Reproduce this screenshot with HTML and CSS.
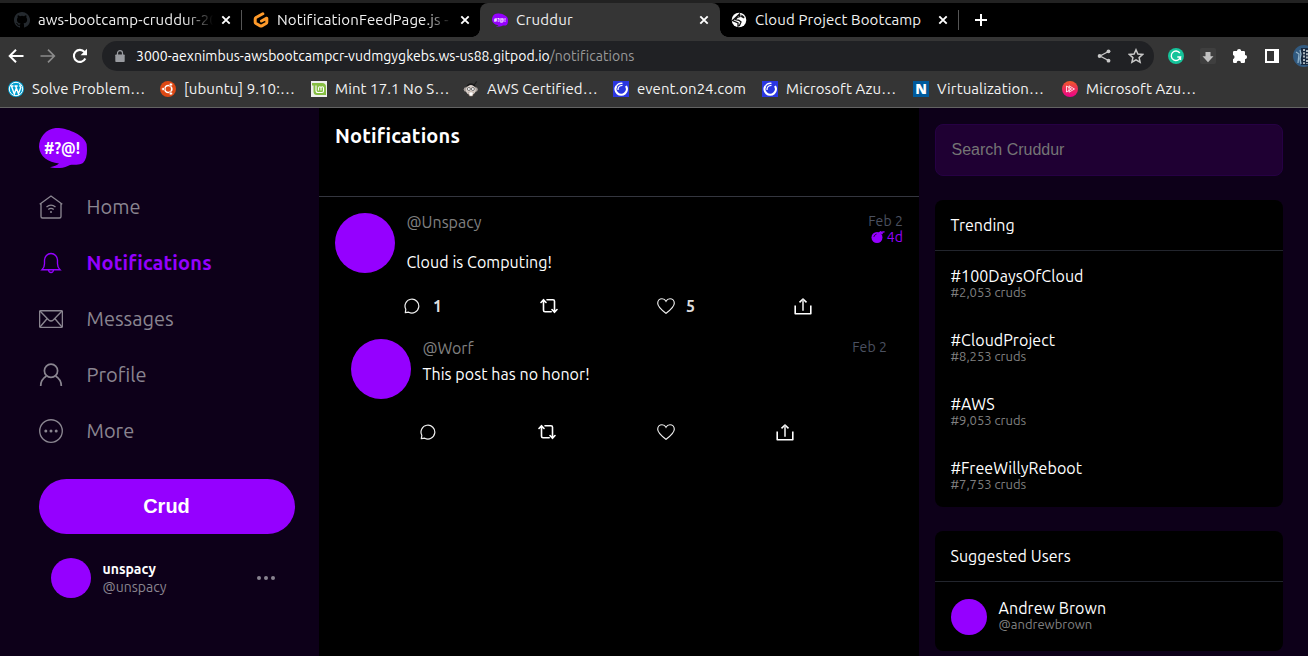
FILE: index.html
```
<!DOCTYPE html>
<html lang="en">
<head>
<meta charset="utf-8">
<title>Cruddur</title>
<link rel="stylesheet" href="styles.css">
</head>
<body>
<svg class="defs" width="0" height="0" aria-hidden="true">
  <defs>
    <symbol id="close" viewBox="0 0 10 10"><path d="M1.3 1.3 8.7 8.7M8.7 1.3 1.3 8.7" fill="none" stroke="#fff" stroke-width="1.9"/></symbol>
    <symbol id="on24" viewBox="0 0 16 16"><path fill="#2a36e0" d="M0 0h16v16H0z"/><path d="M13 5A5.700 5.700 0 1 1 3.400 5" fill="none" stroke="#fff" stroke-width="2.200"/><path d="M3.400 5Q5.500 1.800 9.500 2.300M5 9Q4.800 4.500 9.500 4.300" fill="none" stroke="#fff" stroke-width="1.300"/></symbol>
    <symbol id="bubble" viewBox="0 0 48 40"><path fill="#9500ff" d="M20 0C30 1 45 7 47.600 16 48.500 24 48 31 44 35 40 37.500 35 36.500 31 37 26 40 18 41 11 39.200 15 38.400 18 37.600 20 35.500 9 34 1 29 0 19 0 8 9-1 20 0z"/><text x="5" y="26" textLength="36" lengthAdjust="spacingAndGlyphs" class="bubble-text">#?@!</text></symbol>
    <symbol id="reply" viewBox="0 0 16 16"><path d="M1.300 14.600 1.800 11.300A6.900 6.900 0 1 1 4.700 14.200z" fill="none" stroke="#f0f0f0" stroke-width="1.200" stroke-linejoin="round"/></symbol>
    <symbol id="repost" viewBox="0 0 18 16"><path d="M1 4.500 3.500 1.700 6 4.500M3.500 2v10.200q0 1.500 1.500 1.500h6.200M17 11.500 14.500 14.300 12 11.500M14.500 14V3.300q0-1.500-1.500-1.500H7" fill="none" stroke="#fff" stroke-width="1.600" stroke-linecap="round" stroke-linejoin="round"/></symbol>
    <symbol id="heart" viewBox="0 0 18 16"><path d="M9 15.300C6 13 .7 9 .7 5.200.7 2.500 2.700.7 5 .7 6.800.7 8.200 1.600 9 3.200 9.800 1.600 11.200.7 13 .7c2.300 0 4.300 1.800 4.300 4.500C17.300 9 12 13 9 15.300z" fill="none" stroke="#f0f0f0" stroke-width="1.150"/></symbol>
    <symbol id="share" viewBox="0 0 18 17"><path d="M1.200 7.500v8.300h15.600V7.500M5.500 4.300 9 1 12.500 4.300" fill="none" stroke="#fff" stroke-width="1.600" stroke-linejoin="round"/><path d="M9 1.500v11.200" stroke="#ccc" stroke-width="1.800"/></symbol>
  </defs>
</svg>

<header class="browser">
  <div class="tabs">
    <div class="tab tab-first">
      <svg class="favicon" viewBox="0 0 16 16"><path fill="#24292e" d="M8 0C3.580 0 0 3.580 0 8c0 3.540 2.290 6.530 5.470 7.590.4.070.55-.17.55-.38v-1.490c-2.010.37-2.530-.49-2.690-.94-.09-.23-.48-.94-.82-1.130-.28-.15-.68-.52-.01-.53.63-.01 1.080.58 1.230.82.72 1.210 1.870.87 2.330.66.07-.52.28-.87.51-1.070-1.780-.2-3.640-.89-3.640-3.950 0-.87.31-1.590.82-2.150-.08-.2-.36-1.020.08-2.120 0 0 .67-.21 2.200.82a7.600 7.600 0 0 1 4 0c1.530-1.040 2.200-.82 2.200-.82.44 1.100.16 1.920.08 2.120.51.56.82 1.270.82 2.150 0 3.070-1.870 3.750-3.650 3.950.29.25.54.73.54 1.480v2.200c0 .21.15.46.55.38A8 8 0 0 0 8 0z"/></svg>
      <span class="tab-title fade">aws-bootcamp-cruddur-20</span>
      <svg class="close"><use href="#close"/></svg>
    </div>
    <div class="tab tab-second">
      <svg class="favicon" viewBox="0 0 16 16"><path d="M9.800 1.800 3 5.500q-.8.500-.8 1.400v3.300q0 .8.800 1.300l4.200 2.400q.8.400 1.600 0l4.200-2.400q.8-.5.800-1.300V6.200L8.500 9" fill="none" stroke="#ff9a2a" stroke-width="3" stroke-linecap="round" stroke-linejoin="round"/></svg>
      <span class="tab-title fade">NotificationFeedPage.js -</span>
      <svg class="close"><use href="#close"/></svg>
    </div>
    <div class="tab tab-active">
      <svg class="favicon" viewBox="0 0 48 40"><use href="#bubble"/></svg>
      <span class="tab-title">Cruddur</span>
      <svg class="close"><use href="#close"/></svg>
    </div>
    <div class="tab tab-last">
      <svg class="favicon" viewBox="0 0 16 16"><circle cx="8" cy="8" r="7.300" fill="#fff"/><path d="M8.500 2 9 4.500 6 5.500 4.500 7.500 8 8.300l2 1.700-1.500 3.500-1.500.5V11L1.500 8.500z" fill="none" stroke="#111" stroke-width="1.300"/><path d="M10.500 2.500 10 5l3 1.500.5-1.500z" fill="#111"/></svg>
      <span class="tab-title">Cloud Project Bootcamp</span>
      <svg class="close"><use href="#close"/></svg>
    </div>
    <svg class="new-tab" viewBox="0 0 12 12"><path d="M6 0v12M0 6h12" stroke="#fff" stroke-width="2"/></svg>
  </div>

  <div class="toolbar">
    <div class="nav-buttons">
      <svg viewBox="0 0 16 16"><path d="M15.500 8H2M8 1.700 1.700 8 8 14.300" fill="none" stroke="#fff" stroke-width="2"/></svg>
      <svg viewBox="0 0 16 16"><path d="M.5 8H14M8 1.700 14.300 8 8 14.300" fill="none" stroke="#8b8b8b" stroke-width="1.700"/></svg>
      <svg viewBox="0 0 16 16"><path d="M13.300 10.500A6 6 0 1 1 12.500 4" fill="none" stroke="#fff" stroke-width="2.100"/><path d="M15 .8v6.400H8.600z" fill="#fff"/></svg>
    </div>
    <div class="address">
      <svg class="lock" viewBox="0 0 10 12"><path fill="#999ba0" d="M1 4.500h8q.7 0 .7.700v6q0 .8-.7.800H1q-.7 0-.7-.8v-6q0-.7.700-.7z"/><path d="M2.500 5V3a2.500 2.300 0 0 1 5 0v2" fill="none" stroke="#999ba0" stroke-width="1.200"/></svg>
      <span class="url">3000-aexnimbus-awsbootcampcr-vudmgygkebs.ws-us88.gitpod.io<span class="url-path">/notifications</span></span>
      <svg class="address-icon" viewBox="0 0 16 16"><path d="M12.500 3.500 4 8l8.500 4.500" fill="none" stroke="#c8c8c8" stroke-width="1.300"/><circle cx="12.500" cy="3.300" r="1.900" fill="#c8c8c8"/><circle cx="3.600" cy="8" r="1.900" fill="#c8c8c8"/><circle cx="12.500" cy="12.700" r="1.900" fill="#c8c8c8"/></svg>
      <svg class="address-icon" viewBox="0 0 16 16"><path d="m8 1.800 1.900 4.300 4.700.4-3.500 3.100 1 4.600L8 11.800l-4.100 2.400 1-4.600L1.400 6.500l4.700-.4z" fill="none" stroke="#c8c8c8" stroke-width="1.500"/></svg>
    </div>
    <div class="extensions">
      <svg viewBox="0 0 16 16"><circle cx="8" cy="8" r="8" fill="#15c39a"/><path d="M11.800 5A4.700 4.700 0 1 0 12.500 9H9.300M12.500 9v3" fill="none" stroke="#fff" stroke-width="1.400"/></svg>
      <svg viewBox="0 0 16 16"><rect width="16" height="16" rx="2" fill="#3f3f3f"/><path d="M5.500 4h5v4.300h3L8 14.300 2.500 8.300h3z" fill="#c2c2c2"/></svg>
      <svg viewBox="0 0 16 16"><path fill="#fff" d="M1 4.200q0-1.200 1.200-1.200H5a2.100 2.100 0 0 1 4.200 0h2.600Q13 3 13 4.200V7a2.100 2.100 0 0 1 0 4.200v2.600q0 1.200-1.200 1.200H9a2.200 2.200 0 0 0-4.400 0H2.200Q1 15 1 13.800v-2.600a2.200 2.200 0 0 0 0-4.200z"/></svg>
      <svg viewBox="0 0 16 16"><path fill="#fff" fill-rule="evenodd" d="M1 1h14v14H1zm2 2v10h7V3z"/></svg>
      <svg class="profile-pic" viewBox="0 0 22 22"><circle cx="11" cy="11" r="11" fill="#315a80"/><path fill="#17283e" d="M8 3h14v17H8z"/><path d="M3 7 6 9 5 18M7 5l1 4-1 5 1 5" fill="none" stroke="#8fb0c6" stroke-width="1.300"/><path d="M11 4v15M14 5v14" fill="none" stroke="#c9d0d4" stroke-width="1.700" stroke-dasharray="2 1.300"/></svg>
    </div>
  </div>

  <div class="bookmarks">
    <div class="bookmark"><svg viewBox="0 0 16 16"><circle cx="8" cy="8" r="8" fill="#00a0d2"/><circle cx="8" cy="8" r="6.700" fill="none" stroke="#fff" stroke-width="1"/><path d="M2.500 5h3M3.500 5.300 6.300 13 8.300 7.200M6.500 5h3.200M7.700 5.300l2.800 7.500 2.300-6.300q-1.400-1.500-.6-3" fill="none" stroke="#fff" stroke-width="1.400"/></svg><span>Solve Problem…</span></div>
    <div class="bookmark"><svg viewBox="0 0 16 16"><circle cx="8" cy="8" r="8" fill="#dd4814"/><circle cx="8.300" cy="8" r="3.500" fill="none" stroke="#fff" stroke-width="1.700"/><g fill="#fff" stroke="#dd4814" stroke-width=".6"><circle cx="3.200" cy="8" r="1.600"/><circle cx="10.900" cy="3.500" r="1.600"/><circle cx="10.900" cy="12.500" r="1.600"/></g></svg><span>[ubuntu] 9.10:…</span></div>
    <div class="bookmark"><svg viewBox="0 0 16 16"><path fill="#eee" d="M0 0h16v16H0z"/><path fill="#86be43" d="M1 2h10q4 0 4 4v8H6q-3.500 0-3.500-3.500V4.500H1z"/><path d="M5 4.500v5q0 2 2 2h4q1.500 0 1.500-1.500V7q0-1.300-1.200-1.300T10 7v2.500M10 7q0-1.300-1.200-1.300T7.500 7v2.500" fill="none" stroke="#fff" stroke-width="1.100"/></svg><span>Mint 17.1 No S…</span></div>
    <div class="bookmark"><svg viewBox="0 0 16 16"><circle cx="3" cy="8.500" r="2.300" fill="#a9a19c"/><circle cx="12.500" cy="8.500" r="2.300" fill="#a9a19c"/><circle cx="7.800" cy="9" r="5" fill="#d8cec8"/><path d="M4 5q4-4 8 0M11 4l2.700-3.500" fill="none" stroke="#181818" stroke-width="1.200"/><circle cx="5.900" cy="8" r="1.500" fill="#fff" stroke="#555" stroke-width=".8"/><circle cx="9.900" cy="8" r="1.500" fill="#fff" stroke="#555" stroke-width=".8"/><path d="M5.500 11.500q2.500-1.500 5 0l-1 3.500h-3z" fill="#fff" stroke="#a48d82" stroke-width=".6"/></svg><span>AWS Certified…</span></div>
    <div class="bookmark"><svg><use href="#on24"/></svg><span class="plain">event.on24.com</span></div>
    <div class="bookmark"><svg><use href="#on24"/></svg><span>Microsoft Azu…</span></div>
    <div class="bookmark"><svg viewBox="0 0 16 16"><path fill="#005a9c" d="M0 0h16v16H0z"/><text x="8" y="13" text-anchor="middle" class="n-mark">N</text></svg><span>Virtualization…</span></div>
    <div class="bookmark"><svg viewBox="0 0 16 16"><defs><linearGradient id="pg" x2="0" y2="1"><stop stop-color="#f05a28"/><stop offset="1" stop-color="#ec008c"/></linearGradient></defs><circle cx="8" cy="8" r="8" fill="url(#pg)"/><path d="m7 4.800 5.500 3.200L7 11.200zM4.500 5l5 3-5 3z" fill="none" stroke="#fff" stroke-width=".8"/></svg><span>Microsoft Azu…</span></div>
  </div>
</header>

<div class="app">
  <nav class="sidebar">
    <svg class="logo" viewBox="0 0 48 40"><use href="#bubble"/></svg>
    <a class="nav-item"><svg viewBox="0 0 24 24"><path d="M.7 9.200 12 1l11.300 8.200M2 8.700V21.500q0 1.500 1.500 1.500h17q1.500 0 1.500-1.500V8.700"/><path d="M7.500 12q4.500-3.800 9 0M9.300 14.500q2.700-2.300 5.400 0"/><circle cx="12" cy="17" r="1" class="dot"/></svg><span>Home</span></a>
    <a class="nav-item active"><svg viewBox="0 0 24 24"><path d="M3 18.700q2.500-2.200 2.500-6V9A6.500 6.500 0 0 1 18.500 9v3.700q0 3.800 2.500 6z"/><path d="M9.500 19q.3 2.500 2.500 2.500t2.500-2.500"/></svg><span>Notifications</span></a>
    <a class="nav-item"><svg viewBox="0 0 24 24"><rect x=".6" y="3.700" width="22.800" height="16.600" rx="1"/><path d="M1 4l8.700 9q2.300 2 4.600 0L23 4M1 20l7-8.300M23 20l-7-8.300"/></svg><span>Messages</span></a>
    <a class="nav-item"><svg viewBox="0 0 24 24" class="thick"><circle cx="12" cy="7.700" r="6.600"/><path d="M1.700 23q0-6.500 5.800-10M22.300 23q0-6.500-5.800-10"/></svg><span>Profile</span></a>
    <a class="nav-item"><svg viewBox="0 0 24 24"><circle cx="12" cy="12" r="11.300"/><g class="dot"><circle cx="6.800" cy="12" r="1.500"/><circle cx="12" cy="12" r="1.500"/><circle cx="17.200" cy="12" r="1.500"/></g></svg><span>More</span></a>
    <button class="crud">Crud</button>
    <div class="account">
      <div class="avatar avatar-account"></div>
      <div class="account-names"><div class="account-name">unspacy</div><div class="account-handle">@unspacy</div></div>
      <svg class="dots" viewBox="0 0 20 4"><g fill="#888390"><circle cx="3" cy="2" r="2"/><circle cx="10" cy="2" r="2"/><circle cx="17" cy="2" r="2"/></g></svg>
    </div>
  </nav>

  <main class="feed">
    <div class="feed-head"><h1>Notifications</h1></div>
    <article class="post">
      <div class="post-top">
        <div class="avatar"></div>
        <div class="post-body"><div class="handle">@Unspacy</div><p class="message">Cloud is Computing!</p></div>
        <div class="times"><div class="created">Feb 2</div><div class="expires"><svg viewBox="0 0 14 12"><circle cx="6" cy="6.500" r="5.500" fill="#9500ff"/><path d="M7.500 2.500 9.500.8 11.500 3M9.500 2q2-1.500 4-1" fill="#9500ff" stroke="#9500ff" stroke-width="1.300"/><path d="M2.800 6q.5-2.400 2.800-3" fill="none" stroke="#26003f" stroke-width=".9"/></svg><span>4d</span></div></div>
      </div>
      <div class="actions">
        <div><svg class="i16"><use href="#reply"/></svg><b>1</b></div><div><svg class="i18"><use href="#repost"/></svg></div><div><svg class="i18"><use href="#heart"/></svg><b class="likes">5</b></div><div><svg class="i-share"><use href="#share"/></svg></div>
      </div>
    </article>
    <article class="post reply">
      <div class="post-top">
        <div class="avatar"></div>
        <div class="post-body"><div class="handle">@Worf</div><p class="message">This post has no honor!</p></div>
        <div class="times"><div class="created">Feb 2</div></div>
      </div>
      <div class="actions">
        <div><svg class="i16"><use href="#reply"/></svg></div><div><svg class="i18"><use href="#repost"/></svg></div><div><svg class="i18"><use href="#heart"/></svg></div><div><svg class="i-share"><use href="#share"/></svg></div>
      </div>
    </article>
  </main>

  <aside class="rail">
    <input class="search" type="text" placeholder="Search Cruddur">
    <section class="card">
      <h2>Trending</h2>
      <div class="trend"><div class="tag">#100DaysOfCloud</div><div class="count">#2,053 cruds</div></div>
      <div class="trend"><div class="tag">#CloudProject</div><div class="count">#8,253 cruds</div></div>
      <div class="trend"><div class="tag">#AWS</div><div class="count">#9,053 cruds</div></div>
      <div class="trend"><div class="tag">#FreeWillyReboot</div><div class="count">#7,753 cruds</div></div>
    </section>
    <section class="card">
      <h2>Suggested Users</h2>
      <div class="user"><div class="avatar avatar-user"></div><div><div class="tag">Andrew Brown</div><div class="count">@andrewbrown</div></div></div>
    </section>
  </aside>
</div>
</body>
</html>
```
FILE: styles.css
```
* { box-sizing: border-box; }
html, body { height: 100%; }
body {
  margin: 0;
  overflow: hidden;
  display: flex;
  flex-direction: column;
  background: #000;
  color: #fff;
  font-family: Ubuntu, "Noto Sans", sans-serif;
}
h1, h2, p { margin: 0; }
svg { display: block; flex: none; }
.defs { position: absolute; }

/* Browser chrome */
.browser { flex: none; height: 108px; border-top: 3px solid #222; border-bottom: 1px solid #636363; background: #353535; }
.tabs { height: 34px; background: #000; display: flex; align-items: center; }
.tab { position: relative; height: 34px; display: flex; align-items: center; gap: 8px; font-size: 15px; letter-spacing: .12px; color: #f0f0f0; }
.tab-first { width: 242px; padding: 0 11px 0 14px; }
.tab-second { width: 238px; padding: 0 10px 0 11px; }
.tab-active { width: 240px; padding: 0 11px 0 12px; background: #353535; border-radius: 8px 8px 0 0; letter-spacing: .25px; }
.tab-active::before, .tab-active::after { content: ""; position: absolute; bottom: 0; width: 8px; height: 8px; }
.tab-active::before { left: -8px; background: radial-gradient(circle at 0 0, transparent 7.5px, #353535 8px); }
.tab-active::after { right: -8px; background: radial-gradient(circle at 100% 0, transparent 7.5px, #353535 8px); }
.tab-last { width: 239px; padding: 0 11px; }
.tab-first::after, .tab-last::after { content: ""; position: absolute; right: 0; top: 7px; width: 1px; height: 20px; background: #555; }
.favicon { width: 16px; height: 16px; }
.tab-title { flex: 1; min-width: 0; white-space: nowrap; overflow: hidden; line-height: 20px; }
.fade { -webkit-mask-image: linear-gradient(90deg, #000 84%, transparent 100%); mask-image: linear-gradient(90deg, #000 84%, transparent 100%); }
.close { width: 10px; height: 10px; }
.new-tab { width: 12px; height: 12px; margin-left: 16px; }

.toolbar { height: 37px; display: flex; align-items: center; }
.nav-buttons { flex: none; display: flex; gap: 16px; width: 102px; padding-left: 8px; }
.nav-buttons svg, .extensions svg { width: 16px; height: 16px; }
.address { flex: none; width: 1052px; height: 30px; border-radius: 15px; background: #202124; display: flex; align-items: center; padding: 0 10px 0 13px; }
.lock { width: 10px; height: 12px; margin-right: 11px; }
.url { flex: 1; white-space: nowrap; font-size: 14px; line-height: 20px; letter-spacing: .03px; }
.url-path { color: #9a9a9a; }
.address-icon { width: 16px; height: 16px; }
.address-icon + .address-icon { margin-left: 16px; }
.extensions { flex: none; display: flex; align-items: center; gap: 16px; padding-left: 14px; }
.extensions .profile-pic { width: 22px; height: 22px; margin-left: -3px; }

.bookmarks { height: 30px; display: grid; grid-template-columns: 152px 151px 152px 150px 149px 151px 149px 150px; align-items: center; padding-left: 8px; font-size: 15px; letter-spacing: .1px; }
.bookmark { display: flex; align-items: center; gap: 8px; height: 22px; line-height: 22px; white-space: nowrap; color: #f3f3f3; }
.bookmark svg { width: 16px; height: 16px; }
.plain { letter-spacing: .02px; }
.n-mark { font: 900 14px "Noto Sans", sans-serif; letter-spacing: 0; fill: #fff; }

/* Page */
.app { flex: 1; min-height: 0; display: grid; grid-template-columns: 319px 600px 389px; overflow: hidden; }
.sidebar { background: #0d0019; padding: 20px 24px 0 39px; }
.logo { width: 48px; height: 40px; margin-bottom: 11px; }
.bubble-text { font: 700 17px Ubuntu, "Noto Sans", sans-serif; letter-spacing: 0; fill: #fff; }
.nav-item { height: 56px; display: flex; align-items: center; gap: 23.5px; font-size: 20px; line-height: 24px; color: #8a8590; }
.nav-item svg { width: 24px; height: 24px; fill: none; stroke: currentColor; stroke-width: 1.350; }
.nav-item svg.thick { stroke-width: 1.700; }
.nav-item .dot { fill: currentColor; stroke: none; }
.nav-item.active { color: #9500ff; font-weight: 700; letter-spacing: .18px; }
.crud { display: block; width: 256px; height: 55px; margin: 20px 0 24px; padding-right: 7px; border: 0; border-radius: 28px; background: #9500ff; color: #fff; font: 700 20px "Liberation Sans", Arial, sans-serif; }
.avatar { flex: none; width: 60px; height: 60px; border-radius: 50%; background: #9500ff; }
.avatar-account { width: 40px; height: 40px; }
.account { display: flex; align-items: center; gap: 11.5px; padding: 0 19px 0 12px; }
.account-names { flex: 1; font-size: 14px; line-height: 18px; }
.account-name { font-weight: 700; }
.account-handle { color: #8a8590; }
.dots { width: 20px; height: 4px; }

.feed { background: #000; }
.feed-head { height: 89px; padding: 16px; border-bottom: 1px solid #34363f; }
.feed-head h1 { font-size: 20px; line-height: 24px; letter-spacing: .16px; }
.post { padding: 16px 16px 0; }
.post-top { display: flex; gap: 11.5px; height: 60px; }
.post-body { flex: 1; font-size: 16px; line-height: 18px; }
.handle { color: #808080; }
.message { margin-top: 22px; letter-spacing: .06px; }
.times { font-size: 14px; line-height: 16px; color: #4b5160; text-align: right; letter-spacing: .1px; }
.expires { display: flex; align-items: center; justify-content: flex-end; gap: 2px; color: #9500ff; }
.expires svg { width: 14px; height: 12px; }
.actions { display: grid; grid-template-columns: 136px 117px 137px 30px; align-items: center; margin: 23px 0 0 69px; height: 20px; }
.actions > div { display: flex; align-items: center; gap: 13px; font-size: 16px; line-height: 20px; color: #ddd; }
.i16 { width: 16px; height: 16px; }
.i18 { width: 18px; height: 16px; }
.i-share { width: 18px; height: 17px; }
.likes { margin-left: -2px; }
.reply { padding: 23px 32px 0; }
.reply .message { margin-top: 8px; }
.reply .actions { grid-template-columns: 118px 119px 119px 30px; }

.rail { background: #0d0019; padding: 16px 25px 0 16px; display: flex; flex-direction: column; gap: 24px; min-height: 0; }
.search { flex: none; width: 348px; height: 52px; padding: 0 15.5px; border: 1px solid #260044; border-radius: 8px; background: #1f0033; color: #fff; font: 16px "Liberation Sans", Arial, sans-serif; }
.search::placeholder { color: #757575; }
.card { flex: none; background: #000; border-radius: 8px; }
.card h2 { height: 51px; padding: 0 15.5px; border-bottom: 1px solid #22252d; font-size: 16px; font-weight: 400; line-height: 50px; letter-spacing: .04px; }
.trend { padding: 16px 15.5px; }
.tag { font-size: 16px; line-height: 18px; letter-spacing: .06px; }
.count { font-size: 13px; line-height: 14px; color: #808080; }
.user { display: flex; align-items: center; gap: 11.5px; height: 69px; padding: 0 16px; }
.user .avatar-user { width: 36px; height: 36px; }
.user .tag { margin-top: -3px; }
.trend:last-child { padding-bottom: 16px; }
```
